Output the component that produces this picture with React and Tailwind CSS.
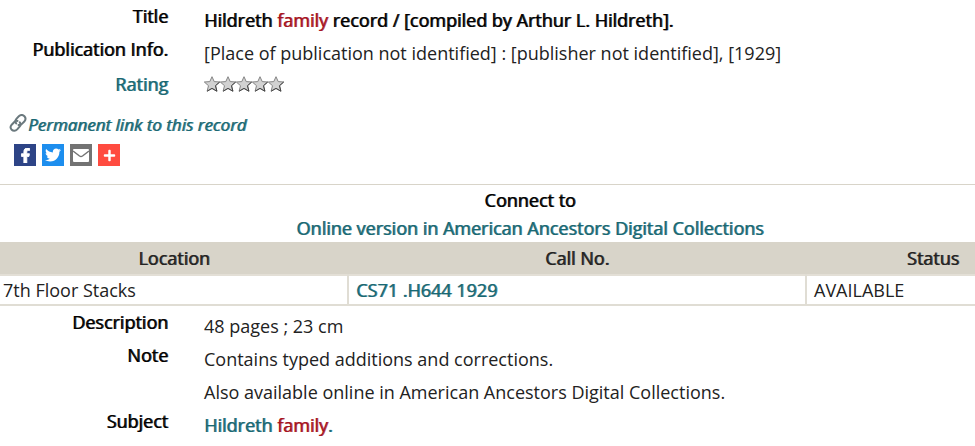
import React from "react";
import { FaFacebookF, FaTwitter, FaPlus } from "react-icons/fa";

const heavy = "[text-shadow:1px_0_0_color-mix(in_srgb,currentColor_80%,transparent)]";

const Row = ({ label, children }) => {
  return (
    <div className="flex h-[33px]">
      <dt className={`w-[168px] pt-1 text-right ${heavy}`}>{label}</dt>
      <dd className="ml-9 pt-2 whitespace-nowrap">{children}</dd>
    </div>
  );
};

const Star = () => {
  return (
    <svg viewBox="0 0 16 16" className="h-4 w-4 overflow-visible">
      <path
        d="M8 0.700 L10.200 5.600 L15.700 6 L11.500 9.700 L12.900 15.200 L8 12.400 L3.100 15.200 L4.500 9.700 L0.300 6 L5.800 5.600 Z"
        fill="#d2d2d2"
        stroke="#858585"
      />
      <path
        d="M15.700 6 L11.500 9.700 L12.900 15.200 L8 12.400 L3.100 15.200"
        fill="none"
        stroke="#444"
      />
    </svg>
  );
};

const ChainIcon = () => {
  return (
    <svg viewBox="0 0 18 18" className="mb-1 h-[18px] w-[18px]" fill="none" strokeLinecap="round">
      <g stroke="#6b797e" strokeWidth="2">
        <path d="M7.200 9.500 C6 7.800 6.300 6.200 7.400 4.800 L9.800 2.300 C11.500 0.800 13.900 0.800 15.400 2.300 C16.800 3.800 16.600 6 15.300 7.500 L12.700 10.100 C11.700 11 10.500 11.300 9.500 11" />
        <path d="M10.800 8.300 C12 10 11.700 11.400 10.600 12.700 L8.200 15.400 C6.500 17.100 4.200 17.200 2.700 15.700 C1.200 14.200 1.400 12.200 2.700 10.700 L5.300 8 C6.300 7 7.500 6.700 8.500 6.900" />
      </g>
    </svg>
  );
};

const MailIcon = () => {
  return (
    <svg viewBox="0 0 22 22" className="h-[22px] w-[22px]">
      <rect x="3" y="5" width="16" height="13" rx="1" fill="#fff" />
      <path d="M3 7 L9.500 12 C10.500 12.700 11.500 12.700 12.500 12 L19 7" fill="none" stroke="#737373" strokeWidth="1.500" />
    </svg>
  );
};

const FacebookIcon = () => {
  return <FaFacebookF size={15} stroke="currentColor" strokeWidth={30} />;
};

const shareLinks = [
  { name: "Facebook", color: "bg-[#2d4486]", icon: <FacebookIcon /> },
  { name: "Twitter", color: "bg-[#1d8eee]", icon: <FaTwitter size={16} /> },
  { name: "Email", color: "bg-[#737373]", icon: <MailIcon /> },
  { name: "More", color: "bg-[#ff4b40]", icon: <FaPlus size={13} /> },
];

const App = () => {
  return (
    <div className="overflow-hidden bg-white">
      {/* the record is wider than small windows, the right side is cut off */}
      <main className="min-w-[1060px] pb-2 font-['Open_Sans',sans-serif] text-[18px] leading-6 text-black">
        <dl>
          <Row label="Title">
            <span className={heavy}>
              Hildreth <span className="text-[#a51221]">family</span> record / [compiled by Arthur L. Hildreth].
            </span>
          </Row>
          <Row label="Publication Info.">
            <span className="text-[#222]">
              [Place of publication not identified] : [publisher not identified], [1929]
            </span>
          </Row>
          <div className="flex h-9 items-center">
            <dt className={`w-[168px] text-right text-[#186873] ${heavy}`}>
              <a href="#rating">Rating</a>
            </dt>
            <dd className="ml-9 flex" aria-label="Not rated">
              {[1, 2, 3, 4, 5].map((n) => (
                <Star key={n} />
              ))}
            </dd>
          </div>
        </dl>

        <a href="#permalink" className={`ml-[9px] mt-[11px] flex w-fit items-center text-[17px] italic text-[#186873] ${heavy}`}>
          <ChainIcon />
          <span className="ml-px">Permanent link to this record</span>
        </a>

        <div className="ml-[14px] mt-[7px] flex gap-[6px]">
          {shareLinks.map((link) => (
            <a
              key={link.name}
              href="#share"
              aria-label={link.name}
              className={`flex h-[22px] w-[22px] items-center justify-center text-white ${link.color}`}
            >
              {link.icon}
            </a>
          ))}
        </div>

        <section className={`mt-[18px] border-t border-[#d8d4c9] pt-[3px] text-center ${heavy}`}>
          <h2>Connect to</h2>
          <a href="#online" className="mt-1 block text-[#186873]">
            Online version in American Ancestors Digital Collections
          </a>
        </section>

        <table className="mt-[2px] w-full table-fixed border-collapse text-[#222]">
          <thead>
            <tr className={`h-[33px] border-b-2 border-[#e3dfd6] bg-[#d8d4c9] ${heavy}`}>
              <th className="w-[348px] font-normal">Location</th>
              <th className="w-[458px] font-normal">Call No.</th>
              <th className="font-normal">Status</th>
            </tr>
          </thead>
          <tbody>
            <tr className="h-[30px] border-b-2 border-[#e0ddd4]">
              <td className="pl-[3px]">7th Floor Stacks</td>
              <td className={`border-x-2 border-[#e0ddd4] pl-[7px] text-[#186873] ${heavy}`}>
                <a href="#call-number">CS71 .H644 1929</a>
              </td>
              <td className="pl-[7px]">AVAILABLE</td>
            </tr>
          </tbody>
        </table>

        <dl>
          <Row label="Description">
            <span className="text-[#222]">48 pages ; 23 cm</span>
          </Row>
          <Row label="Note">
            <span className="text-[#222]">Contains typed additions and corrections.</span>
          </Row>
          <Row label="">
            <span className="text-[#222]">Also available online in American Ancestors Digital Collections.</span>
          </Row>
          <Row label="Subject">
            <a href="#subject" className={`text-[#186873] ${heavy}`}>
              Hildreth <span className="text-[#a51221]">family</span>.
            </a>
          </Row>
        </dl>
      </main>
    </div>
  );
};

export default App;
